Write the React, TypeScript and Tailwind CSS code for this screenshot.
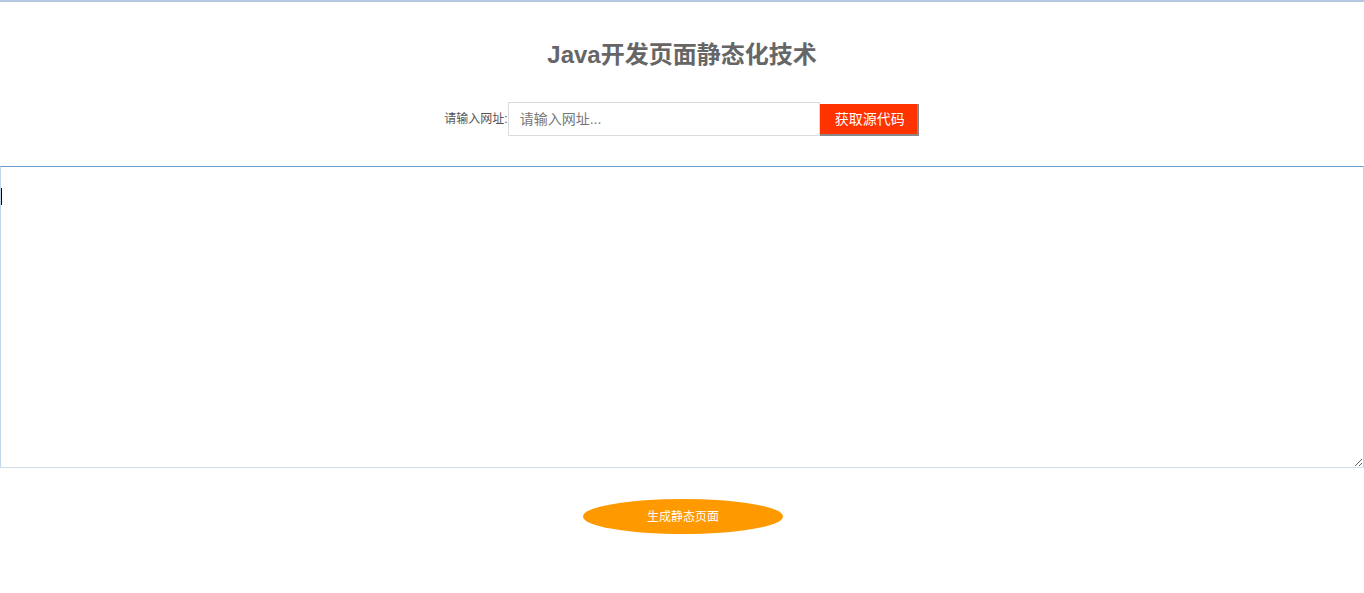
import React from "react";

export default function App() {
  return (
    <div
      className="w-[1364px] h-[593px] bg-white overflow-hidden border-t-2 border-[#b4c8e0]"
      style={{ fontFamily: '"Liberation Sans", "Noto Sans CJK SC", sans-serif' }}
    >
      <h1 className="mt-[36px] h-[34px] leading-[34px] text-center text-[24px] font-bold text-[#666666]">
        Java开发页面静态化技术
      </h1>
      <div className="mt-[30px] flex justify-center items-center pr-[1px]">
        <span className="text-[12px] text-[#555555]">请输入网址:</span>
        <input
          className="w-[312px] h-[34px] border border-[#dcdcdc] px-[11px] text-[14px] outline-none placeholder:text-[#777777]"
          placeholder="请输入网址..."
        />
        <button className="w-[99px] h-[32px] bg-[#ff3300] text-white text-[14px] border-r-2 border-b-2 border-[#888888] mt-[2px] pl-[3px]">
          获取源代码
        </button>
      </div>
      <div className="mt-[30px] relative">
        <textarea
          className="block w-[1364px] h-[302px] border border-[#c3d6ea] border-t-[#6a9bc8] border-b-[#cfdde8] outline-none text-[14px] p-[2px] resize"
        />
        <div className="absolute left-[1px] top-[22px] w-[1px] h-[17px] bg-black" />
      </div>
      <div className="mt-[31px] flex justify-center pl-[2px]">
        <button className="w-[200px] h-[35px] rounded-[50%] bg-[#ff9900] text-white text-[12px]">
          生成静态页面
        </button>
      </div>
    </div>
  );
}
